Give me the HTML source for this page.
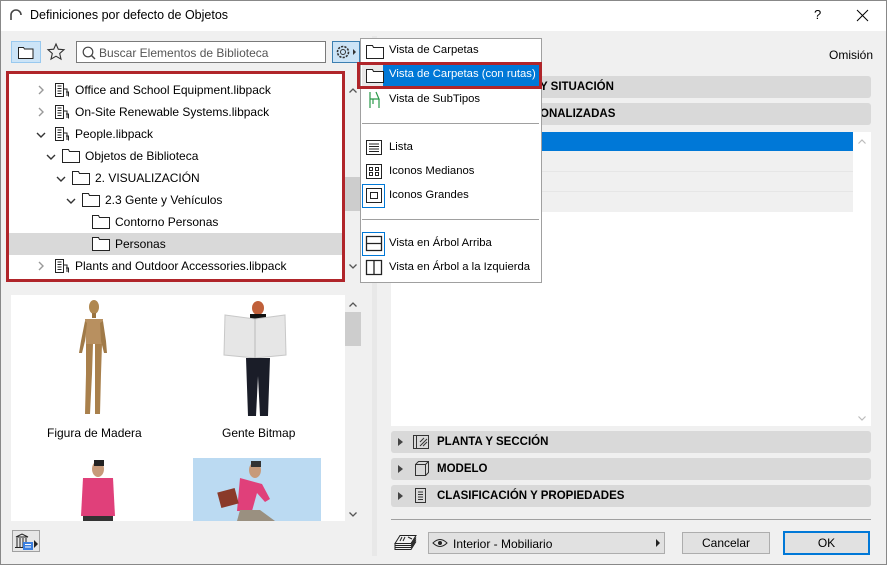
<!DOCTYPE html>
<html><head><meta charset="utf-8"><style>
*{box-sizing:border-box;margin:0;padding:0}
body{width:887px;height:565px;overflow:hidden;background:#f0f0f0;font-family:"Liberation Sans",sans-serif;font-size:12px;color:#000;position:relative}
.a{position:absolute}
.win{left:0;top:0;width:887px;height:565px;border:1px solid #888}
.t{white-space:nowrap}
.row{position:absolute;left:11px;width:331px;height:22px;line-height:22px}
.sec{position:absolute;left:391px;width:480px;height:22px;background:#d9d9d9;border-radius:3px;font-weight:bold;font-size:11.5px;line-height:22px}
.mi{position:absolute;left:389px;font-size:11.3px}
.btn{position:absolute;background:#e1e1e1;border:1px solid #adadad;text-align:center;line-height:20px}
svg{position:absolute;overflow:visible}
</style></head><body>
<div class="a win"></div>
<div class="a" style="left:1px;top:1px;width:885px;height:30px;background:#fff"></div>
<svg style="left:10px;top:9px" width="12" height="12"><path d="M1 11V6A5 5 0 0 1 11 6" fill="none" stroke="#444" stroke-width="1.6"/></svg>
<div class="a t" style="left:30px;top:8px;font-size:12.5px">Definiciones por defecto de Objetos</div>
<div class="a t" style="left:814px;top:7px;font-size:13px">?</div>
<svg style="left:857px;top:10px" width="11" height="11"><path d="M0 0L11 11M11 0L0 11" stroke="#000" stroke-width="1"/></svg>

<div class="a" style="left:11px;top:41px;width:30px;height:22px;background:#cce4f7;border:1px solid #99c9ef"></div>
<svg style="left:18px;top:46px" width="16" height="13"><path d="M0.5 1.5h5l1 1.5h8.5v9.5h-14.5z" fill="#fff" stroke="#222"/></svg>
<svg style="left:47px;top:43px" width="18" height="18"><path d="M9 1l2.3 5.2 5.7.5-4.3 3.8 1.3 5.6L9 13.2 4 16.1l1.3-5.6L1 6.7l5.7-.5z" fill="none" stroke="#333" stroke-width="1.1"/></svg>
<div class="a" style="left:76px;top:41px;width:250px;height:22px;background:#fff;border:1px solid #7a7a7a"></div>
<svg style="left:82px;top:46px" width="14" height="14"><circle cx="6" cy="6" r="4.8" fill="none" stroke="#444" stroke-width="1.2"/><path d="M9.5 9.5L13 13" stroke="#444" stroke-width="1.4"/></svg>
<div class="a t" style="left:99px;top:46px;color:#555">Buscar Elementos de Biblioteca</div>
<div class="a" style="left:332px;top:41px;width:28px;height:22px;background:#cce4f7;border:1px solid #3c7fb1"></div>
<svg style="left:336px;top:45px" width="22" height="14"><circle cx="7" cy="7" r="2.5" fill="none" stroke="#333"/><circle cx="7" cy="7" r="5.5" fill="none" stroke="#333" stroke-dasharray="2.2 1.2" stroke-width="1.6"/><path d="M17 4l3 3-3 3z" fill="#333"/></svg>

<div class="a" style="left:6px;top:71px;width:339px;height:211px;background:#fff;border:3px solid #b0252a"></div>
<div class="a" style="left:345px;top:72px;width:16px;height:209px;background:#f0f0f0"></div>
<div class="a" style="left:345px;top:177px;width:16px;height:34px;background:#cdcdcd"></div>
<svg style="left:349px;top:88px" width="8" height="5"><path d="M0.5 4.5l3.5-3.5 3.5 3.5" fill="none" stroke="#555" stroke-width="1.3"/></svg>
<svg style="left:349px;top:264px" width="8" height="5"><path d="M0.5 0.5l3.5 3.5 3.5-3.5" fill="none" stroke="#555" stroke-width="1.3"/></svg>
<div class="row" style="top:233px;left:9px;width:333px;background:#d9d9d9"></div>

<svg style="left:37px;top:85px" width="8" height="10"><path d="M2 1l4 4-4 4" fill="none" stroke="#999" stroke-width="1.4"/></svg>
<svg style="left:37px;top:107px" width="8" height="10"><path d="M2 1l4 4-4 4" fill="none" stroke="#999" stroke-width="1.4"/></svg>
<svg style="left:36px;top:131px" width="10" height="8"><path d="M1 2l4 4 4-4" fill="none" stroke="#333" stroke-width="1.4"/></svg>
<svg style="left:46px;top:153px" width="10" height="8"><path d="M1 2l4 4 4-4" fill="none" stroke="#333" stroke-width="1.4"/></svg>
<svg style="left:56px;top:175px" width="10" height="8"><path d="M1 2l4 4 4-4" fill="none" stroke="#333" stroke-width="1.4"/></svg>
<svg style="left:66px;top:197px" width="10" height="8"><path d="M1 2l4 4 4-4" fill="none" stroke="#333" stroke-width="1.4"/></svg>
<svg style="left:37px;top:261px" width="8" height="10"><path d="M2 1l4 4-4 4" fill="none" stroke="#999" stroke-width="1.4"/></svg>
<svg style="left:54px;top:82px" width="16" height="16"><path d="M1.5 1.5h8v13h-8zM3.5 4h4M3.5 6.5h4M3.5 9h4M3.5 11.5h4M10 7h3v7M12 10h2.5v4.5" fill="none" stroke="#222"/></svg>
<svg style="left:54px;top:104px" width="16" height="16"><path d="M1.5 1.5h8v13h-8zM3.5 4h4M3.5 6.5h4M3.5 9h4M3.5 11.5h4M10 7h3v7M12 10h2.5v4.5" fill="none" stroke="#222"/></svg>
<svg style="left:54px;top:126px" width="16" height="16"><path d="M1.5 1.5h8v13h-8zM3.5 4h4M3.5 6.5h4M3.5 9h4M3.5 11.5h4M10 7h3v7M12 10h2.5v4.5" fill="none" stroke="#222"/></svg>
<svg style="left:54px;top:258px" width="16" height="16"><path d="M1.5 1.5h8v13h-8zM3.5 4h4M3.5 6.5h4M3.5 9h4M3.5 11.5h4M10 7h3v7M12 10h2.5v4.5" fill="none" stroke="#222"/></svg>
<svg style="left:62px;top:149px" width="18" height="14"><path d="M0.5 0.5h6l1 2h10v11h-17z" fill="#fff" stroke="#222"/></svg>
<svg style="left:72px;top:171px" width="18" height="14"><path d="M0.5 0.5h6l1 2h10v11h-17z" fill="#fff" stroke="#222"/></svg>
<svg style="left:82px;top:193px" width="18" height="14"><path d="M0.5 0.5h6l1 2h10v11h-17z" fill="#fff" stroke="#222"/></svg>
<svg style="left:92px;top:215px" width="18" height="14"><path d="M0.5 0.5h6l1 2h10v11h-17z" fill="#fff" stroke="#222"/></svg>
<svg style="left:92px;top:237px" width="18" height="14"><path d="M0.5 0.5h6l1 2h10v11h-17z" fill="#fff" stroke="#222"/></svg>
<div class="a t" style="left:75px;top:83px">Office and School Equipment.libpack</div>
<div class="a t" style="left:75px;top:105px">On-Site Renewable Systems.libpack</div>
<div class="a t" style="left:75px;top:127px">People.libpack</div>
<div class="a t" style="left:85px;top:149px">Objetos de Biblioteca</div>
<div class="a t" style="left:95px;top:171px">2. VISUALIZACIÓN</div>
<div class="a t" style="left:105px;top:193px">2.3 Gente y Vehículos</div>
<div class="a t" style="left:115px;top:215px">Contorno Personas</div>
<div class="a t" style="left:115px;top:237px">Personas</div>
<div class="a t" style="left:75px;top:259px">Plants and Outdoor Accessories.libpack</div>

<div class="a" style="left:11px;top:295px;width:334px;height:226px;background:#fff"></div>
<div class="a" style="left:345px;top:295px;width:16px;height:226px;background:#f0f0f0"></div>
<div class="a" style="left:345px;top:312px;width:16px;height:34px;background:#cdcdcd"></div>
<svg style="left:349px;top:302px" width="8" height="5"><path d="M0.5 4.5l3.5-3.5 3.5 3.5" fill="none" stroke="#555" stroke-width="1.3"/></svg>
<svg style="left:349px;top:512px" width="8" height="5"><path d="M0.5 0.5l3.5 3.5 3.5-3.5" fill="none" stroke="#555" stroke-width="1.3"/></svg>
<svg style="left:76px;top:299px" width="32" height="120"><ellipse cx="18" cy="8" rx="5" ry="7" fill="#b08850"/><rect x="16" y="14" width="4" height="5" fill="#9a7440"/><path d="M9 20h18l-1 25h-16z" fill="#b89060"/><path d="M9 22l-4 20-2 12h3l3-12 2-18zM27 22l3 20 1 12h-3l-3-12-1-18z" fill="#a07a48"/><path d="M10 45h7l-1 30-2 40h-5l1-40zM19 45h7l-1 30-1 40h-5l0-40z" fill="#a9804c"/></svg>
<svg style="left:222px;top:299px" width="70" height="120"><ellipse cx="36" cy="9" rx="6" ry="7" fill="#c0603a"/><rect x="28" y="15" width="16" height="5" fill="#111"/><path d="M3 16l30 4 30-4 1 40-31 3-31-3z" fill="#e6e6e6" stroke="#c8c8c8"/><path d="M33 20v39" stroke="#bbb"/><path d="M24 59h24l-2 58h-8l-2-40-2 40h-8z" fill="#1a1d28"/></svg>
<div class="a t" style="left:47px;top:426px">Figura de Madera</div>
<div class="a t" style="left:222px;top:426px">Gente Bitmap</div>
<svg style="left:78px;top:460px" width="42" height="61"><ellipse cx="20" cy="9" rx="6" ry="8" fill="#c79a7a"/><path d="M16 0h10v6h-10z" fill="#222"/><path d="M5 18h30l2 38h-34z" fill="#e0407a"/><rect x="5" y="56" width="30" height="5" fill="#333"/></svg>
<div class="a" style="left:193px;top:458px;width:128px;height:63px;background:#bbdaf2"></div>
<svg style="left:215px;top:460px" width="80" height="61"><ellipse cx="40" cy="10" rx="6" ry="8" fill="#c79a7a"/><path d="M36 1h10v6H36z" fill="#333"/><path d="M25 18l22 6 8 15-5 3-8-9-5 18H22z" fill="#e0407a"/><rect x="4" y="30" width="18" height="16" fill="#8a3a2a" transform="rotate(-15 13 38)"/><path d="M25 50h20l15 11H22z" fill="#9a9080"/></svg>
<div class="a" style="left:12px;top:530px;width:28px;height:22px;border:1px solid #a0a0a0;background:#e6e6e6"></div>
<svg style="left:14px;top:533px" width="26" height="18"><path d="M2 4l6-3 6 3zM3 5v9M6 5v9M9 5v9M12 5v9M1 14.5h13" fill="none" stroke="#222"/><rect x="9" y="9" width="10" height="8" fill="#3a7fe0"/><path d="M11 11.5h6M11 14h6" stroke="#fff"/><path d="M20 7l4 4-4 4z" fill="#222"/></svg>

<div class="a" style="left:372px;top:36px;width:5px;height:520px;background:#e8e8e8"></div>

<div class="a t" style="left:829px;top:48px">Omisión</div>
<div class="sec" style="top:76px"><span style="position:absolute;left:149px">Y SITUACIÓN</span></div>
<div class="sec" style="top:103px"><span style="position:absolute;left:149px">ONALIZADAS</span></div>
<div class="a" style="left:391px;top:132px;width:480px;height:294px;background:#fff"></div>
<div class="a" style="left:391px;top:132px;width:462px;height:19px;background:#0078d7"></div>
<div class="a" style="left:391px;top:151px;width:462px;height:61px;background:#f0f0f0"></div>
<div class="a" style="left:391px;top:171px;width:462px;height:1px;background:#e6e6e6"></div>
<div class="a" style="left:391px;top:191px;width:462px;height:1px;background:#e6e6e6"></div>
<svg style="left:858px;top:139px" width="8" height="5"><path d="M0.5 4.5l3.5-3.5 3.5 3.5" fill="none" stroke="#bbb" stroke-width="1.2"/></svg>
<svg style="left:858px;top:416px" width="8" height="5"><path d="M0.5 0.5l3.5 3.5 3.5-3.5" fill="none" stroke="#bbb" stroke-width="1.2"/></svg>

<div class="sec" style="top:431px"></div>
<div class="sec" style="top:458px"></div>
<div class="sec" style="top:485px"></div>
<svg style="left:398px;top:438px" width="6" height="8"><path d="M0 0l5 4-5 4z" fill="#444"/></svg>
<svg style="left:398px;top:465px" width="6" height="8"><path d="M0 0l5 4-5 4z" fill="#444"/></svg>
<svg style="left:398px;top:492px" width="6" height="8"><path d="M0 0l5 4-5 4z" fill="#444"/></svg>
<svg style="left:412px;top:434px" width="18" height="16"><path d="M4.5 1.5h12v13h-12zM4.5 1.5h-3v13h3M8 12l7-7M8 8l4-4M11 12l4-4" fill="none" stroke="#333"/></svg>
<svg style="left:412px;top:460px" width="18" height="18"><path d="M3.5 4.5h10v11h-10zM3.5 4.5l3-3h10v11l-3 3M13.5 4.5l3-3" fill="none" stroke="#333"/></svg>
<svg style="left:414px;top:488px" width="14" height="16"><path d="M1.5 0.5h10v14h-10zM4 4h5M4 6.5h5M4 9h5M4 11.5h5" fill="none" stroke="#333"/></svg>
<div class="a t" style="left:437px;top:436px;font-weight:bold;font-size:11.5px">PLANTA Y SECCIÓN</div>
<div class="a t" style="left:437px;top:463px;font-weight:bold;font-size:11.5px">MODELO</div>
<div class="a t" style="left:437px;top:490px;font-weight:bold;font-size:11.5px">CLASIFICACIÓN Y PROPIEDADES</div>
<div class="a" style="left:391px;top:519px;width:480px;height:1px;background:#a0a0a0"></div>

<svg style="left:394px;top:534px" width="24" height="18"><path d="M6 1.5h16l-5 8H1zM1 9.5v2h16l5-8M1 11.5v2h16l5-8M1 13.5v2h16l5-8M8 3l-2 4M11 3l-2 4M14 3l4 2" fill="none" stroke="#222"/></svg>
<div class="btn" style="left:428px;top:532px;width:237px;height:22px;text-align:left"></div>
<svg style="left:432px;top:538px" width="16" height="10"><path d="M1 5Q8-2 15 5Q8 12 1 5z" fill="none" stroke="#222"/><circle cx="8" cy="5" r="2" fill="#222"/></svg>
<div class="a t" style="left:453px;top:537px">Interior - Mobiliario</div>
<svg style="left:656px;top:539px" width="5" height="8"><path d="M0 0l4 4-4 4z" fill="#222"/></svg>
<div class="btn" style="left:682px;top:532px;width:88px;height:22px">Cancelar</div>
<div class="btn" style="left:783px;top:531px;width:87px;height:24px;border:2px solid #0078d7;line-height:20px">OK</div>

<div class="a" style="left:360px;top:38px;width:182px;height:245px;background:#fff;border:1px solid #a0a0a0"></div>
<div class="a" style="left:383px;top:64px;width:157px;height:22px;background:#0078d7"></div>
<div class="a" style="left:362px;top:64px;width:21px;height:22px;background:#e8e8e8"></div>
<div class="a" style="left:357px;top:62px;width:185px;height:27px;border:3px solid #b0252a"></div>
<svg style="left:366px;top:45px" width="18" height="14"><path d="M0.5 0.5h6l1 2h10v11h-17z" fill="#fff" stroke="#222"/></svg>
<svg style="left:366px;top:69px" width="18" height="14"><path d="M0.5 0.5h6l1 2h10v11h-17z" fill="#fff" stroke="#222"/></svg>
<svg style="left:367px;top:91px" width="16" height="18"><path d="M3 1v16M3 8h9l-3-7M12 8v9M6 8v5" fill="none" stroke="#2a9a4a" stroke-width="1.2"/></svg>
<div class="mi t" style="top:44px">Vista de Carpetas</div>
<div class="mi t" style="top:68px;color:#fff">Vista de Carpetas (con rutas)</div>
<div class="mi t" style="top:93px">Vista de SubTipos</div>
<div class="a" style="left:362px;top:123px;width:177px;height:1px;background:#a0a0a0"></div>
<svg style="left:366px;top:140px" width="17" height="16"><path d="M0.5 0.5h15v14h-15zM3 4h10M3 6.5h10M3 9h10M3 11.5h10" fill="none" stroke="#222"/></svg>
<svg style="left:366px;top:164px" width="17" height="16"><path d="M0.5 0.5h15v14h-15zM3.5 3.5h3v3h-3zM9.5 3.5h3v3h-3zM3.5 8.5h3v3h-3zM9.5 8.5h3v3h-3z" fill="none" stroke="#222"/></svg>
<div class="a" style="left:362px;top:184px;width:23px;height:24px;border:1px solid #0078d7"></div>
<svg style="left:366px;top:188px" width="17" height="16"><path d="M0.5 0.5h15v14h-15zM4.5 4.5h7v6h-7z" fill="none" stroke="#222"/></svg>
<div class="mi t" style="top:141px">Lista</div>
<div class="mi t" style="top:165px">Iconos Medianos</div>
<div class="mi t" style="top:189px">Iconos Grandes</div>
<div class="a" style="left:362px;top:219px;width:177px;height:1px;background:#a0a0a0"></div>
<div class="a" style="left:362px;top:232px;width:23px;height:24px;border:1px solid #0078d7"></div>
<svg style="left:366px;top:236px" width="17" height="16"><path d="M0.5 0.5h15v14h-15zM0.5 7.5h15" fill="none" stroke="#222" stroke-width="1.3"/></svg>
<svg style="left:366px;top:260px" width="17" height="16"><path d="M0.5 0.5h15v14h-15zM8 0.5v14" fill="none" stroke="#222" stroke-width="1.3"/></svg>
<div class="mi t" style="top:237px">Vista en Árbol Arriba</div>
<div class="mi t" style="top:261px">Vista en Árbol a la Izquierda</div>
</body></html>
